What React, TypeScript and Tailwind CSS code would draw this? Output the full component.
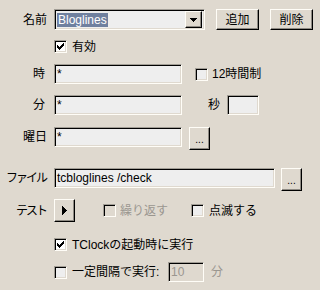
import React from "react";

const font = { fontFamily: '"Liberation Sans", "Noto Sans CJK JP", sans-serif' };

const SUNKEN =
  "border border-t-[#a19d95] border-l-[#a19d95] border-b-[#fffdf7] border-r-[#fffdf7] shadow-[inset_1px_1px_0_#000,inset_-1px_-1px_0_#dfd9cf]";
const RAISED =
  "border border-t-[#fffdf7] border-l-[#fffdf7] border-b-[#000] border-r-[#000] shadow-[inset_-1px_-1px_0_#8e8a83,inset_1px_1px_0_#dfd9cf]";

const CHECK = [
  "......X",
  ".....XX",
  "X...XXX",
  "XX.XXX.",
  "XXXXX..",
  ".XXX...",
  "..X....",
];

function CheckMark() {
  const rects: React.ReactNode[] = [];
  CHECK.forEach((row, y) =>
    row.split("").forEach((c, x) => {
      if (c === "X") rects.push(<rect key={`${x}-${y}`} x={x} y={y} width={1} height={1} fill="#000" />);
    })
  );
  return (
    <svg width="7" height="7" viewBox="0 0 7 7" shapeRendering="crispEdges">
      {rects}
    </svg>
  );
}

function Checkbox({ checked, disabled, white }: { checked?: boolean; disabled?: boolean; white?: boolean }) {
  return (
    <div
      className={`w-[13px] h-[13px] flex items-center justify-center shrink-0 ${SUNKEN} ${
        disabled ? "bg-[#dfd9cf]" : white ? "bg-white" : "bg-[#eeeeee]"
      }`}
    >
      {checked && <CheckMark />}
    </div>
  );
}

function Input({ w, value, disabled }: { w: string; value?: string; disabled?: boolean }) {
  return (
    <div
      className={`${w} h-[20px] shrink-0 flex items-center pl-[2px] text-[12px] leading-none whitespace-nowrap ${SUNKEN} ${
        disabled ? "bg-[#dfd9cf] text-[#9a968f]" : "bg-[#eeeeee] text-black"
      }`}
    >
      {value}
    </div>
  );
}

function Dots() {
  return (
    <div className={`w-[21px] h-[23px] shrink-0 flex items-center justify-center text-[10px] leading-none pt-[2px] ${RAISED}`}>
      ...
    </div>
  );
}

export default function App() {
  return (
    <div
      className="w-[320px] h-[290px] bg-[#dfd9cf] text-black text-[12px] leading-none overflow-hidden whitespace-nowrap"
      style={font}
    >
      <div className="flex flex-col pt-[9px]">
        {/* Row 1 */}
        <div className="flex items-center h-[21px]">
          <div className="w-[47px] text-right">名前</div>
          <div className={`ml-[7px] w-[151px] h-[21px] flex items-center pl-[2px] pr-[2px] bg-[#eeeeee] ${SUNKEN}`}>
            <div className="flex-1 flex items-center">
              <span className="bg-[#6f809f] text-white px-[1px] h-[14px] flex items-center">Bloglines</span>
            </div>
            <div className={`w-[17px] h-[17px] flex items-center justify-center bg-[#dfd9cf] ${RAISED}`}>
              <svg width="7" height="4" viewBox="0 0 7 4" shapeRendering="crispEdges">
                <polygon points="0,0 7,0 3.5,4" fill="#000" />
              </svg>
            </div>
          </div>
          <div className={`ml-[11px] w-[43px] h-[21px] flex items-center justify-center ${RAISED}`}>追加</div>
          <div className={`ml-[11px] w-[43px] h-[21px] flex items-center justify-center ${RAISED}`}>削除</div>
        </div>

        {/* Row 2 */}
        <div className="flex items-center h-[13px] mt-[10px] pl-[54px]">
          <Checkbox checked white />
          <span className="ml-[5px]">有効</span>
        </div>

        {/* Row 3 */}
        <div className="flex items-center h-[20px] mt-[11px]">
          <div className="w-[47px] text-right pr-[2px]">時</div>
          <div className="ml-[7px]">
            <Input w="w-[128px]" value="*" />
          </div>
          <div className="ml-[13px]">
            <Checkbox />
          </div>
          <span className="ml-[4px]">12時間制</span>
        </div>

        {/* Row 4 */}
        <div className="flex items-center h-[20px] mt-[11px]">
          <div className="w-[47px] text-right pr-[2px]">分</div>
          <div className="ml-[7px]">
            <Input w="w-[128px]" value="*" />
          </div>
          <span className="ml-[26px]">秒</span>
          <div className="ml-[7px]">
            <Input w="w-[32px]" />
          </div>
        </div>

        {/* Row 5 */}
        <div className="flex items-center h-[23px] mt-[12px]">
          <div className="w-[47px] text-right self-start h-[20px] flex items-center justify-end">曜日</div>
          <div className="ml-[7px] self-start">
            <Input w="w-[128px]" value="*" />
          </div>
          <div className="ml-[7px]">
            <Dots />
          </div>
        </div>

        {/* Row 6 */}
        <div className="flex items-center h-[23px] mt-[18px]">
          <div className="w-[47px] self-start h-[20px] flex items-center justify-end tracking-[-2px] pr-[1px]">ファイル</div>
          <div className="ml-[7px] self-start">
            <Input w="w-[221px]" value="tcbloglines /check" />
          </div>
          <div className="ml-[6px]">
            <Dots />
          </div>
        </div>

        {/* Row 7 */}
        <div className="flex items-center h-[23px] mt-[8px]">
          <div className="w-[47px] flex justify-end tracking-[-2px] pr-[1px]">テスト</div>
          <div className={`ml-[7px] w-[21px] h-[23px] flex items-center justify-center ${RAISED}`}>
            <svg width="5" height="9" viewBox="0 0 5 9" shapeRendering="crispEdges">
              <polygon points="0,0 5,4.5 0,9" fill="#000" />
            </svg>
          </div>
          <div className="ml-[28px]">
            <Checkbox disabled />
          </div>
          <span className="ml-[4px] text-[#9a968f]">繰り返す</span>
          <div className="ml-[23px]">
            <Checkbox />
          </div>
          <span className="ml-[5px]">点滅する</span>
        </div>

        {/* Row 8 */}
        <div className="flex items-center h-[13px] mt-[16px] pl-[54px]">
          <Checkbox checked white />
          <span className="ml-[5px]">TClockの起動時に実行</span>
        </div>

        {/* Row 9 */}
        <div className="flex items-center h-[20px] mt-[11px] pl-[54px]">
          <Checkbox />
          <span className="ml-[5px] w-[96px]">一定間隔で実行:</span>
          <Input w="w-[36px]" value="10" disabled />
          <span className="ml-[7px] text-[#9a968f]">分</span>
        </div>
      </div>
    </div>
  );
}
